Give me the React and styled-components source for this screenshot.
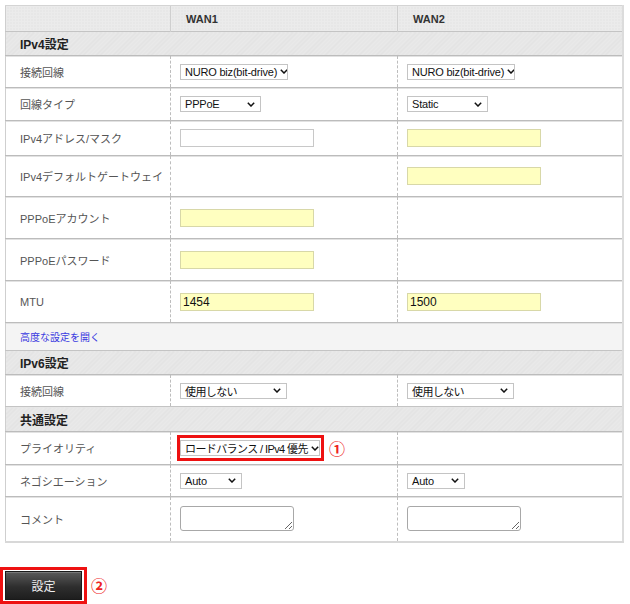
import React from 'react';
import styled, { createGlobalStyle } from 'styled-components';

const Global = createGlobalStyle`
  html, body {
    margin: 0;
    padding: 0;
    background: #fff;
  }
  body {
    font-family: "Liberation Sans", "Noto Sans CJK JP", sans-serif;
    color: #444;
  }
`;

const Page = styled.div`
  width: 630px;
  padding-top: 5px;
`;

const Table = styled.table`
  margin-left: 5px;
  width: 617px;
  border-collapse: collapse;
  table-layout: fixed;
  border-left: 1px solid #cfcfcf;
  border-right: 2px solid #dcdcdc;
  border-bottom: 2px solid #d8d8d8;
`;

const HeadCell = styled.th`
  height: 25px;
  padding: 0 0 0 15px;
  text-align: left;
  font-size: 11px;
  font-weight: bold;
  color: #333;
  background-color: #ebebeb;
  background-image: radial-gradient(#dcdcdc 0.6px, transparent 0.7px);
  background-size: 3px 3px;
  border-top: 1px solid #d4d4d4;
  border-left: 1px solid #cfcfcf;
  &:first-child { border-left: none; }
`;

const SectionCell = styled.td`
  height: ${p => p.$h}px;
  padding: 0 0 0 14px;
  font-size: 12px;
  font-weight: bold;
  color: #222;
  background: repeating-linear-gradient(135deg, #e9e9e9 0 1px, #e2e2e2 1px 2px, #e9e9e9 2px 3px);
  border-top: 1px solid #c4c4c4;
`;

const Row = styled.tr`
  height: ${p => p.$h}px;
`;

const Label = styled.td`
  padding: 0 0 0 14px;
  font-size: 11px;
  color: #555;
  border-top: 1px solid #bcbcbc;
  box-shadow: inset 0 1px 0 #e2e2e2;
  vertical-align: middle;
`;

const Cell = styled.td`
  padding: 0 0 0 9px;
  border-top: 1px solid #bcbcbc;
  box-shadow: inset 0 1px 0 #e2e2e2;
  border-left: 1px dashed #bdbdbd;
  vertical-align: middle;
`;

const LinkCell = styled.td`
  padding: 0 0 0 14px;
  background: #f4f4f4;
  border-top: 1px solid #bcbcbc;
  box-shadow: inset 0 1px 0 #e2e2e2;
  font-size: 10px;
`;

const Link = styled.a`
  color: #3a3ae0;
  text-decoration: none;
  cursor: pointer;
`;

const SelectBox = styled.div`
  box-sizing: border-box;
  width: ${p => p.$w}px;
  height: 16px;
  display: flex;
  align-items: center;
  justify-content: space-between;
  padding: 0 5px 0 4px;
  border: 1px solid #c4c4c4;
  background: #fff;
  font-size: 11px;
  color: #111;
  white-space: nowrap;
  overflow: hidden;
  letter-spacing: -0.2px;
  svg { flex-shrink: 0; margin-left: 3px; }
`;

const Chevron = () => (
  <svg width="8" height="5" viewBox="0 0 8 5">
    <path d="M0.8 0.8 L4 4 L7.2 0.8" fill="none" stroke="#111" strokeWidth="1.5" />
  </svg>
);

const Select = ({ w, children }) => (
  <SelectBox $w={w}>
    <span>{children}</span>
    <Chevron />
  </SelectBox>
);

const TextBox = styled.div`
  box-sizing: border-box;
  width: 134px;
  height: 18px;
  border: 1px solid ${p => (p.$yellow ? '#d8d8a8' : '#c8c8c8')};
  background: ${p => (p.$yellow ? '#ffffc0' : '#fff')};
  font-size: 12px;
  color: #111;
  padding: 1px 0 0 2px;
  line-height: 14px;
`;

const Memo = styled.textarea`
  box-sizing: border-box;
  display: block;
  width: 114px;
  height: 25px;
  margin: 0;
  border: 1px solid #a8a8a8;
  border-radius: 3px;
  resize: both;
  background: #fff;
`;

const Marked = styled.div`
  display: flex;
  align-items: center;
  gap: 5px;
  margin-left: -3px;
`;

const RedFrame = styled.div`
  display: inline-flex;
  padding: ${p => p.$pad};
  border: 3px solid #ee1111;
`;

const Num = styled.span`
  color: #ee2222;
  font-family: "Noto Sans CJK JP", sans-serif;
  font-size: ${p => p.$size}px;
  font-weight: bold;
  line-height: 1;
`;

const Footer = styled.div`
  display: flex;
  align-items: center;
  gap: 4px;
  margin-top: 24px;
`;

const Button = styled.button`
  width: 77px;
  height: 29px;
  border: 1px solid #1a1a1a;
  background: linear-gradient(#5a5a5a, #2e2e2e 55%, #1e1e1e);
  color: #f0f0f0;
  font-family: "Noto Sans CJK JP", sans-serif;
  font-size: 12px;
  box-shadow: inset 0 1px 0 #777;
  padding: 0;
`;

const Jp = styled.span`
  font-size: 11px;
  letter-spacing: -0.6px;
`;

const rowsV4 = [
  { label: '接続回線', h: 32, a: <Select w={108}>NURO biz(bit-drive)</Select>, b: <Select w={108}>NURO biz(bit-drive)</Select> },
  { label: '回線タイプ', h: 33, a: <Select w={81}>PPPoE</Select>, b: <Select w={81}>Static</Select> },
  { label: 'IPv4アドレス/マスク', h: 35, a: <TextBox />, b: <TextBox $yellow /> },
  { label: 'IPv4デフォルトゲートウェイ', h: 41, a: null, b: <TextBox $yellow /> },
  { label: 'PPPoEアカウント', h: 42, a: <TextBox $yellow />, b: null },
  { label: 'PPPoEパスワード', h: 42, a: <TextBox $yellow />, b: null },
  { label: 'MTU', h: 42, a: <TextBox $yellow>1454</TextBox>, b: <TextBox $yellow>1500</TextBox> },
];

const DataRow = ({ label, h, a, b }) => (
  <Row $h={h}>
    <Label>{label}</Label>
    <Cell>{a}</Cell>
    <Cell>{b}</Cell>
  </Row>
);

export default function App() {
  return (
    <Page>
      <Global />
      <Table>
        <colgroup>
          <col style={{ width: 165 }} />
          <col style={{ width: 227 }} />
          <col style={{ width: 225 }} />
        </colgroup>
        <thead>
          <tr>
            <HeadCell></HeadCell>
            <HeadCell>WAN1</HeadCell>
            <HeadCell>WAN2</HeadCell>
          </tr>
        </thead>
        <tbody>
          <tr><SectionCell colSpan={3} $h={23}>IPv4設定</SectionCell></tr>
          {rowsV4.map(r => <DataRow key={r.label} {...r} />)}
          <Row $h={28}>
            <LinkCell colSpan={3}><Link>高度な設定を開く</Link></LinkCell>
          </Row>
          <tr><SectionCell colSpan={3} $h={23}>IPv6設定</SectionCell></tr>
          <DataRow label="接続回線" h={32} a={<Select w={107}><Jp>使用しない</Jp></Select>} b={<Select w={107}><Jp>使用しない</Jp></Select>} />
          <tr><SectionCell colSpan={3} $h={24}>共通設定</SectionCell></tr>
          <DataRow
            label="プライオリティ"
            h={33}
            a={
              <Marked>
                <RedFrame $pad="2px 1px 2px 0">
                  <Select w={140}><Jp>ロードバランス / IPv4 優先</Jp></Select>
                </RedFrame>
                <Num $size={16}>①</Num>
              </Marked>
            }
            b={null}
          />
          <DataRow label="ネゴシエーション" h={32} a={<Select w={62}>Auto</Select>} b={<Select w={58}>Auto</Select>} />
          <DataRow label="コメント" h={45} a={<Memo />} b={<Memo />} />
        </tbody>
      </Table>
      <Footer>
        <RedFrame $pad="1px 2px 1px 2px">
          <Button>設定</Button>
        </RedFrame>
        <Num $size={16}>②</Num>
      </Footer>
    </Page>
  );
}
